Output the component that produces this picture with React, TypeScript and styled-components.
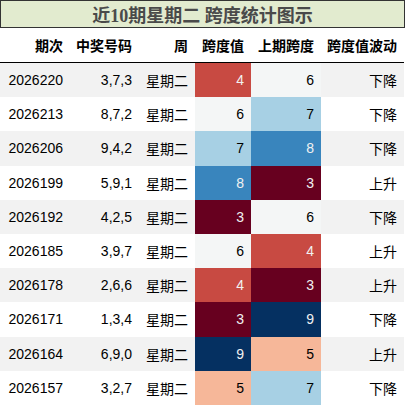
import React from 'react';
import styled, { createGlobalStyle } from 'styled-components';

const GlobalStyle = createGlobalStyle`
  body {
    margin: 0;
    background: #ffffff;
    font-family: "Liberation Sans", Arial, "Noto Sans CJK SC", sans-serif;
  }
`;

// --- data ---
type Row = { issue: string; nums: string; week: string; span: number; prev: number; trend: string };

const rows: Row[] = [
  { issue: '2026220', nums: '3,7,3', week: '星期二', span: 4, prev: 6, trend: '下降' },
  { issue: '2026213', nums: '8,7,2', week: '星期二', span: 6, prev: 7, trend: '下降' },
  { issue: '2026206', nums: '9,4,2', week: '星期二', span: 7, prev: 8, trend: '下降' },
  { issue: '2026199', nums: '5,9,1', week: '星期二', span: 8, prev: 3, trend: '上升' },
  { issue: '2026192', nums: '4,2,5', week: '星期二', span: 3, prev: 6, trend: '下降' },
  { issue: '2026185', nums: '3,9,7', week: '星期二', span: 6, prev: 4, trend: '上升' },
  { issue: '2026178', nums: '2,6,6', week: '星期二', span: 4, prev: 3, trend: '上升' },
  { issue: '2026171', nums: '1,3,4', week: '星期二', span: 3, prev: 9, trend: '下降' },
  { issue: '2026164', nums: '6,9,0', week: '星期二', span: 9, prev: 5, trend: '上升' },
  { issue: '2026157', nums: '3,2,7', week: '星期二', span: 5, prev: 7, trend: '下降' },
];

// RdBu_r scale, 3..9
const heat: Record<number, { bg: string; fg: string }> = {
  3: { bg: '#67001f', fg: '#f1f1f1' },
  4: { bg: '#c84a42', fg: '#f1f1f1' },
  5: { bg: '#f6b799', fg: '#000000' },
  6: { bg: '#f4f6f6', fg: '#000000' },
  7: { bg: '#a7d0e4', fg: '#000000' },
  8: { bg: '#3985bd', fg: '#f1f1f1' },
  9: { bg: '#053061', fg: '#f1f1f1' },
};

const columns = '70px 69px 56px 56px 70px 83px';

// --- Styled Components ---
const Wrapper = styled.div`
  width: 405px;
`;

const TitleBar = styled.div`
  height: 26px;
  border: 1px solid #333333;
  background: #e2ebcf;
  display: flex;
  align-items: center;
  justify-content: center;
  font-family: "Liberation Serif", "Noto Sans CJK SC", serif;
  font-size: 18px;
  font-weight: 700;
  color: #4a4a4a;
`;

const HeaderRow = styled.div`
  display: grid;
  grid-template-columns: ${columns};
  height: 34px;
  border-bottom: 1px solid #000000;
  width: 404px;
`;

const HeadCell = styled.div`
  display: flex;
  align-items: center;
  justify-content: flex-end;
  padding-right: 7px;
  font-family: "Liberation Sans", "Noto Sans CJK SC", sans-serif;
  font-size: 14px;
  font-weight: 700;
  color: #000000;
`;

const DataRow = styled.div<{ $striped: boolean }>`
  display: grid;
  grid-template-columns: ${columns};
  height: 34.2px;
  width: 404px;
  background: ${({ $striped }) => ($striped ? '#f2f2f2' : '#ffffff')};
`;

const Cell = styled.div<{ $bg?: string; $fg?: string }>`
  display: flex;
  align-items: center;
  justify-content: flex-end;
  padding-right: 7px;
  font-size: 14px;
  color: ${({ $fg }) => $fg || '#000000'};
  background: ${({ $bg }) => $bg || 'transparent'};
`;

const headers = ['期次', '中奖号码', '周', '跨度值', '上期跨度', '跨度值波动'];

export default function App() {
  return (
    <>
      <GlobalStyle />
      <Wrapper>
        <TitleBar>近10期星期二 跨度统计图示</TitleBar>
        <HeaderRow>
          {headers.map((h) => (
            <HeadCell key={h}>{h}</HeadCell>
          ))}
        </HeaderRow>
        {rows.map((r, i) => (
          <DataRow key={r.issue} $striped={i % 2 === 0}>
            <Cell>{r.issue}</Cell>
            <Cell>{r.nums}</Cell>
            <Cell>{r.week}</Cell>
            <Cell $bg={heat[r.span].bg} $fg={heat[r.span].fg}>{r.span}</Cell>
            <Cell $bg={heat[r.prev].bg} $fg={heat[r.prev].fg}>{r.prev}</Cell>
            <Cell>{r.trend}</Cell>
          </DataRow>
        ))}
      </Wrapper>
    </>
  );
}
